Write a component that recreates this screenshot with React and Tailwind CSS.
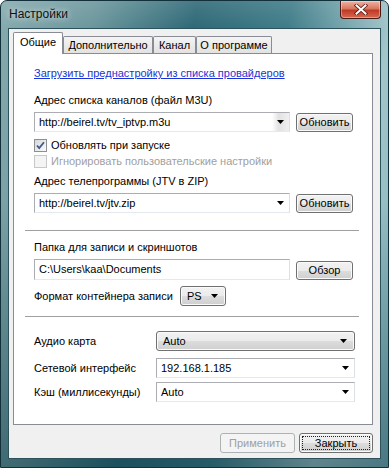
import React from "react";

function Arrow() {
  return (
    <svg width="7" height="4" viewBox="0 0 7 4" className="shrink-0">
      <path d="M0 0h7L3.5 4z" fill="#000" />
    </svg>
  );
}

function Button({ children, disabled, isDefault, className = "" }) {
  const base =
    "flex items-center justify-center rounded-[3px] border shrink-0 " + className;
  if (disabled) {
    return (
      <div className={base + " border-[#adb2b5] bg-[#f4f4f4] text-[#a0a0a0]"}>
        {children}
      </div>
    );
  }
  return (
    <div
      className={
        base +
        " border-[#707070] bg-[linear-gradient(to_bottom,#f2f2f2_0%,#ebebeb_50%,#dddddd_50%,#cfcfcf_100%)] shadow-[inset_0_0_0_1px_#fafafa]" +
        (isDefault ? " border-[#3a3a3a] p-[2px]" : "")
      }
    >
      {isDefault ? (
        <div className="w-full h-full flex items-center justify-center border border-dotted border-[#222]">
          {children}
        </div>
      ) : (
        children
      )}
    </div>
  );
}

function Combo({ text, list, hot, className = "" }) {
  if (list) {
    return (
      <div
        className={
          "flex items-center justify-between rounded-[3px] border border-[#707070] bg-[linear-gradient(to_bottom,#f2f2f2_0%,#ebebeb_50%,#dddddd_50%,#cfcfcf_100%)] shadow-[inset_0_0_0_1px_#fafafa] pl-[6px] pr-[7px] shrink-0 " +
          className
        }
      >
        <span>{text}</span>
        <Arrow />
      </div>
    );
  }
  return (
    <div
      className={
        "flex items-center border border-[#abadb3] border-r-[#dbdfe6] border-b-[#e3e9ef] bg-white shrink-0 " +
        className
      }
    >
      <span className="flex-1 pl-[4px] truncate">{text}</span>
      <div
        className={
          "w-[17px] h-full flex items-center justify-center " +
          (hot ? "bg-[linear-gradient(to_right,#ffffff,#e2e2e2_40%,#f0f0f0)]" : "")
        }
      >
        <Arrow />
      </div>
    </div>
  );
}

function Checkbox({ checked, disabled, label }) {
  return (
    <div className="flex items-center h-[14px]">
      <div
        className={
          "w-[13px] h-[13px] border flex items-center justify-center shrink-0 " +
          (disabled
            ? "border-[#c8c8c8] bg-[#f4f4f4]"
            : "border-[#8f8f8f] bg-[linear-gradient(135deg,#d4d7db,#fbfbfb)]")
        }
      >
        {checked && (
          <svg width="9" height="9" viewBox="0 0 9 9">
            <path
              d="M1 4.5l2.2 2.5L8 1.2"
              fill="none"
              stroke="#3f5a8c"
              strokeWidth="1.8"
            />
          </svg>
        )}
      </div>
      <span className={"ml-[4px] " + (disabled ? "text-[#a0a0a0]" : "")}>{label}</span>
    </div>
  );
}

function Tab({ children, active, className = "" }) {
  if (active) {
    return (
      <div
        className={
          "relative z-10 -mb-px h-[22px] bg-white border border-b-0 border-[#898c95] rounded-t-[2px] flex items-center justify-center pb-[2px] whitespace-nowrap " +
          className
        }
      >
        {children}
      </div>
    );
  }
  return (
    <div
      className={
        "h-[17px] border border-b-0 border-[#898c95] rounded-t-[2px] bg-[linear-gradient(to_bottom,#f4f4f4,#e2e2e2)] flex items-center justify-center whitespace-nowrap " +
        className
      }
    >
      {children}
    </div>
  );
}

export default function App() {
  return (
    <div className="w-[389px] h-[468px] relative overflow-hidden rounded-t-[7px] border border-[#12303a] flex flex-col font-['Liberation_Sans',Arial,sans-serif] text-[11px] leading-[13px] text-black bg-[linear-gradient(to_bottom,rgba(255,255,255,0.12)_0px,rgba(0,0,0,0)_30px,rgba(0,0,0,0)_200px,rgba(10,50,62,0.45)_100%),linear-gradient(100deg,#86aaae_0%,#6a969c_20%,#2c6775_42%,#3d7b87_62%,#a3c6ca_84%,#7db0b8_100%)]">
      <div className="h-[27px] flex items-center pl-[8px] shrink-0">
        <span className="text-[12px] text-[#101010] [text-shadow:0_0_6px_rgba(255,255,255,0.9)]">
          Настройки
        </span>
      </div>
      <div className="absolute top-0 right-[7px] w-[41px] h-[18px] rounded-b-[4px] border border-t-0 border-[#4a1a14] bg-[linear-gradient(to_bottom,#eeb4a4_0%,#d8765e_45%,#c03a26_55%,#d66a52_100%)] flex items-center justify-center shadow-[inset_0_0_0_1px_rgba(255,255,255,0.35)]">
        <svg width="14" height="11" viewBox="0 0 14 11">
          <path d="M2.5 1.5l9 8M11.5 1.5l-9 8" stroke="#5a1c14" strokeWidth="3.6" strokeLinecap="square" />
          <path d="M2.5 1.5l9 8M11.5 1.5l-9 8" stroke="#fff" strokeWidth="2" strokeLinecap="square" />
        </svg>
      </div>

      <div className="mx-[7px] h-[431px] shrink-0 bg-[#f0f0f0] border border-[#2e525b] flex flex-col pt-[3px] pl-[4px] pr-[7px]">
        <div className="flex items-end h-[21px] shrink-0">
          <Tab active className="w-[50px]">
            Общие
          </Tab>
          <Tab className="w-[90px]">Дополнительно</Tab>
          <Tab className="w-[43px]">Канал</Tab>
          <Tab className="w-[76px]">О программе</Tab>
        </div>

        <div className="h-[372px] shrink-0 bg-white border border-[#898c95] flex flex-col pl-[20px] pr-[19px]">
          <div className="mt-[13px] text-[#1b33d6] underline">
            Загрузить преднастройку из списка провайдеров
          </div>

          <div className="mt-[14px]">Адрес списка каналов (файл M3U)</div>
          <div className="mt-[5px] flex items-start justify-between h-[20px]">
            <Combo hot text="http://beirel.tv/tv_iptvp.m3u" className="w-[256px] h-[20px]" />
            <Button className="mt-[1px] w-[57px] h-[19px]">Обновить</Button>
          </div>

          <div className="mt-[6px]">
            <Checkbox checked label="Обновлять при запуске" />
          </div>
          <div className="mt-[2px]">
            <Checkbox disabled label="Игнорировать пользовательские настройки" />
          </div>

          <div className="mt-[7px]">Адрес телепрограммы (JTV в ZIP)</div>
          <div className="mt-[5px] flex items-start justify-between h-[20px]">
            <Combo text="http://beirel.tv/jtv.zip" className="w-[256px] h-[20px]" />
            <Button className="mt-[1px] w-[57px] h-[19px]">Обновить</Button>
          </div>

          <div className="mt-[17px] -ml-[9px] -mr-[6px] border-t border-[#a0a0a0]" />

          <div className="mt-[10px]">Папка для записи и скриншотов</div>
          <div className="mt-[5px] flex items-start justify-between h-[21px]">
            <div className="w-[256px] h-[21px] border border-[#abadb3] border-r-[#dbdfe6] border-b-[#e3e9ef] bg-white flex items-center pl-[4px]">
              C:\Users\kaa\Documents
            </div>
            <Button className="mt-[2px] w-[57px] h-[19px]">Обзор</Button>
          </div>

          <div className="mt-[6px] flex items-center h-[20px]">
            <span className="w-[146px] shrink-0">Формат контейнера записи</span>
            <Combo list text="PS" className="w-[46px] h-[20px]" />
          </div>

          <div className="mt-[10px] -ml-[9px] -mr-[6px] border-t border-[#a0a0a0]" />

          <div className="mt-[14px] flex items-center h-[20px]">
            <span className="w-[122px] shrink-0">Аудио карта</span>
            <Combo list text="Auto" className="w-[199px] h-[20px]" />
          </div>
          <div className="mt-[7px] flex items-center h-[20px]">
            <span className="w-[122px] shrink-0">Сетевой интерфейс</span>
            <Combo text="192.168.1.185" className="w-[199px] h-[20px]" />
          </div>
          <div className="mt-[4px] flex items-center h-[20px]">
            <span className="w-[122px] shrink-0">Кэш (миллисекунды)</span>
            <Combo text="Auto" className="w-[199px] h-[20px]" />
          </div>
        </div>

        <div className="mt-[8px] flex justify-end gap-[4px]">
          <Button disabled className="w-[75px] h-[20px]">
            Применить
          </Button>
          <Button isDefault className="w-[74px] h-[20px]">
            Закрыть
          </Button>
        </div>
      </div>
    </div>
  );
}
